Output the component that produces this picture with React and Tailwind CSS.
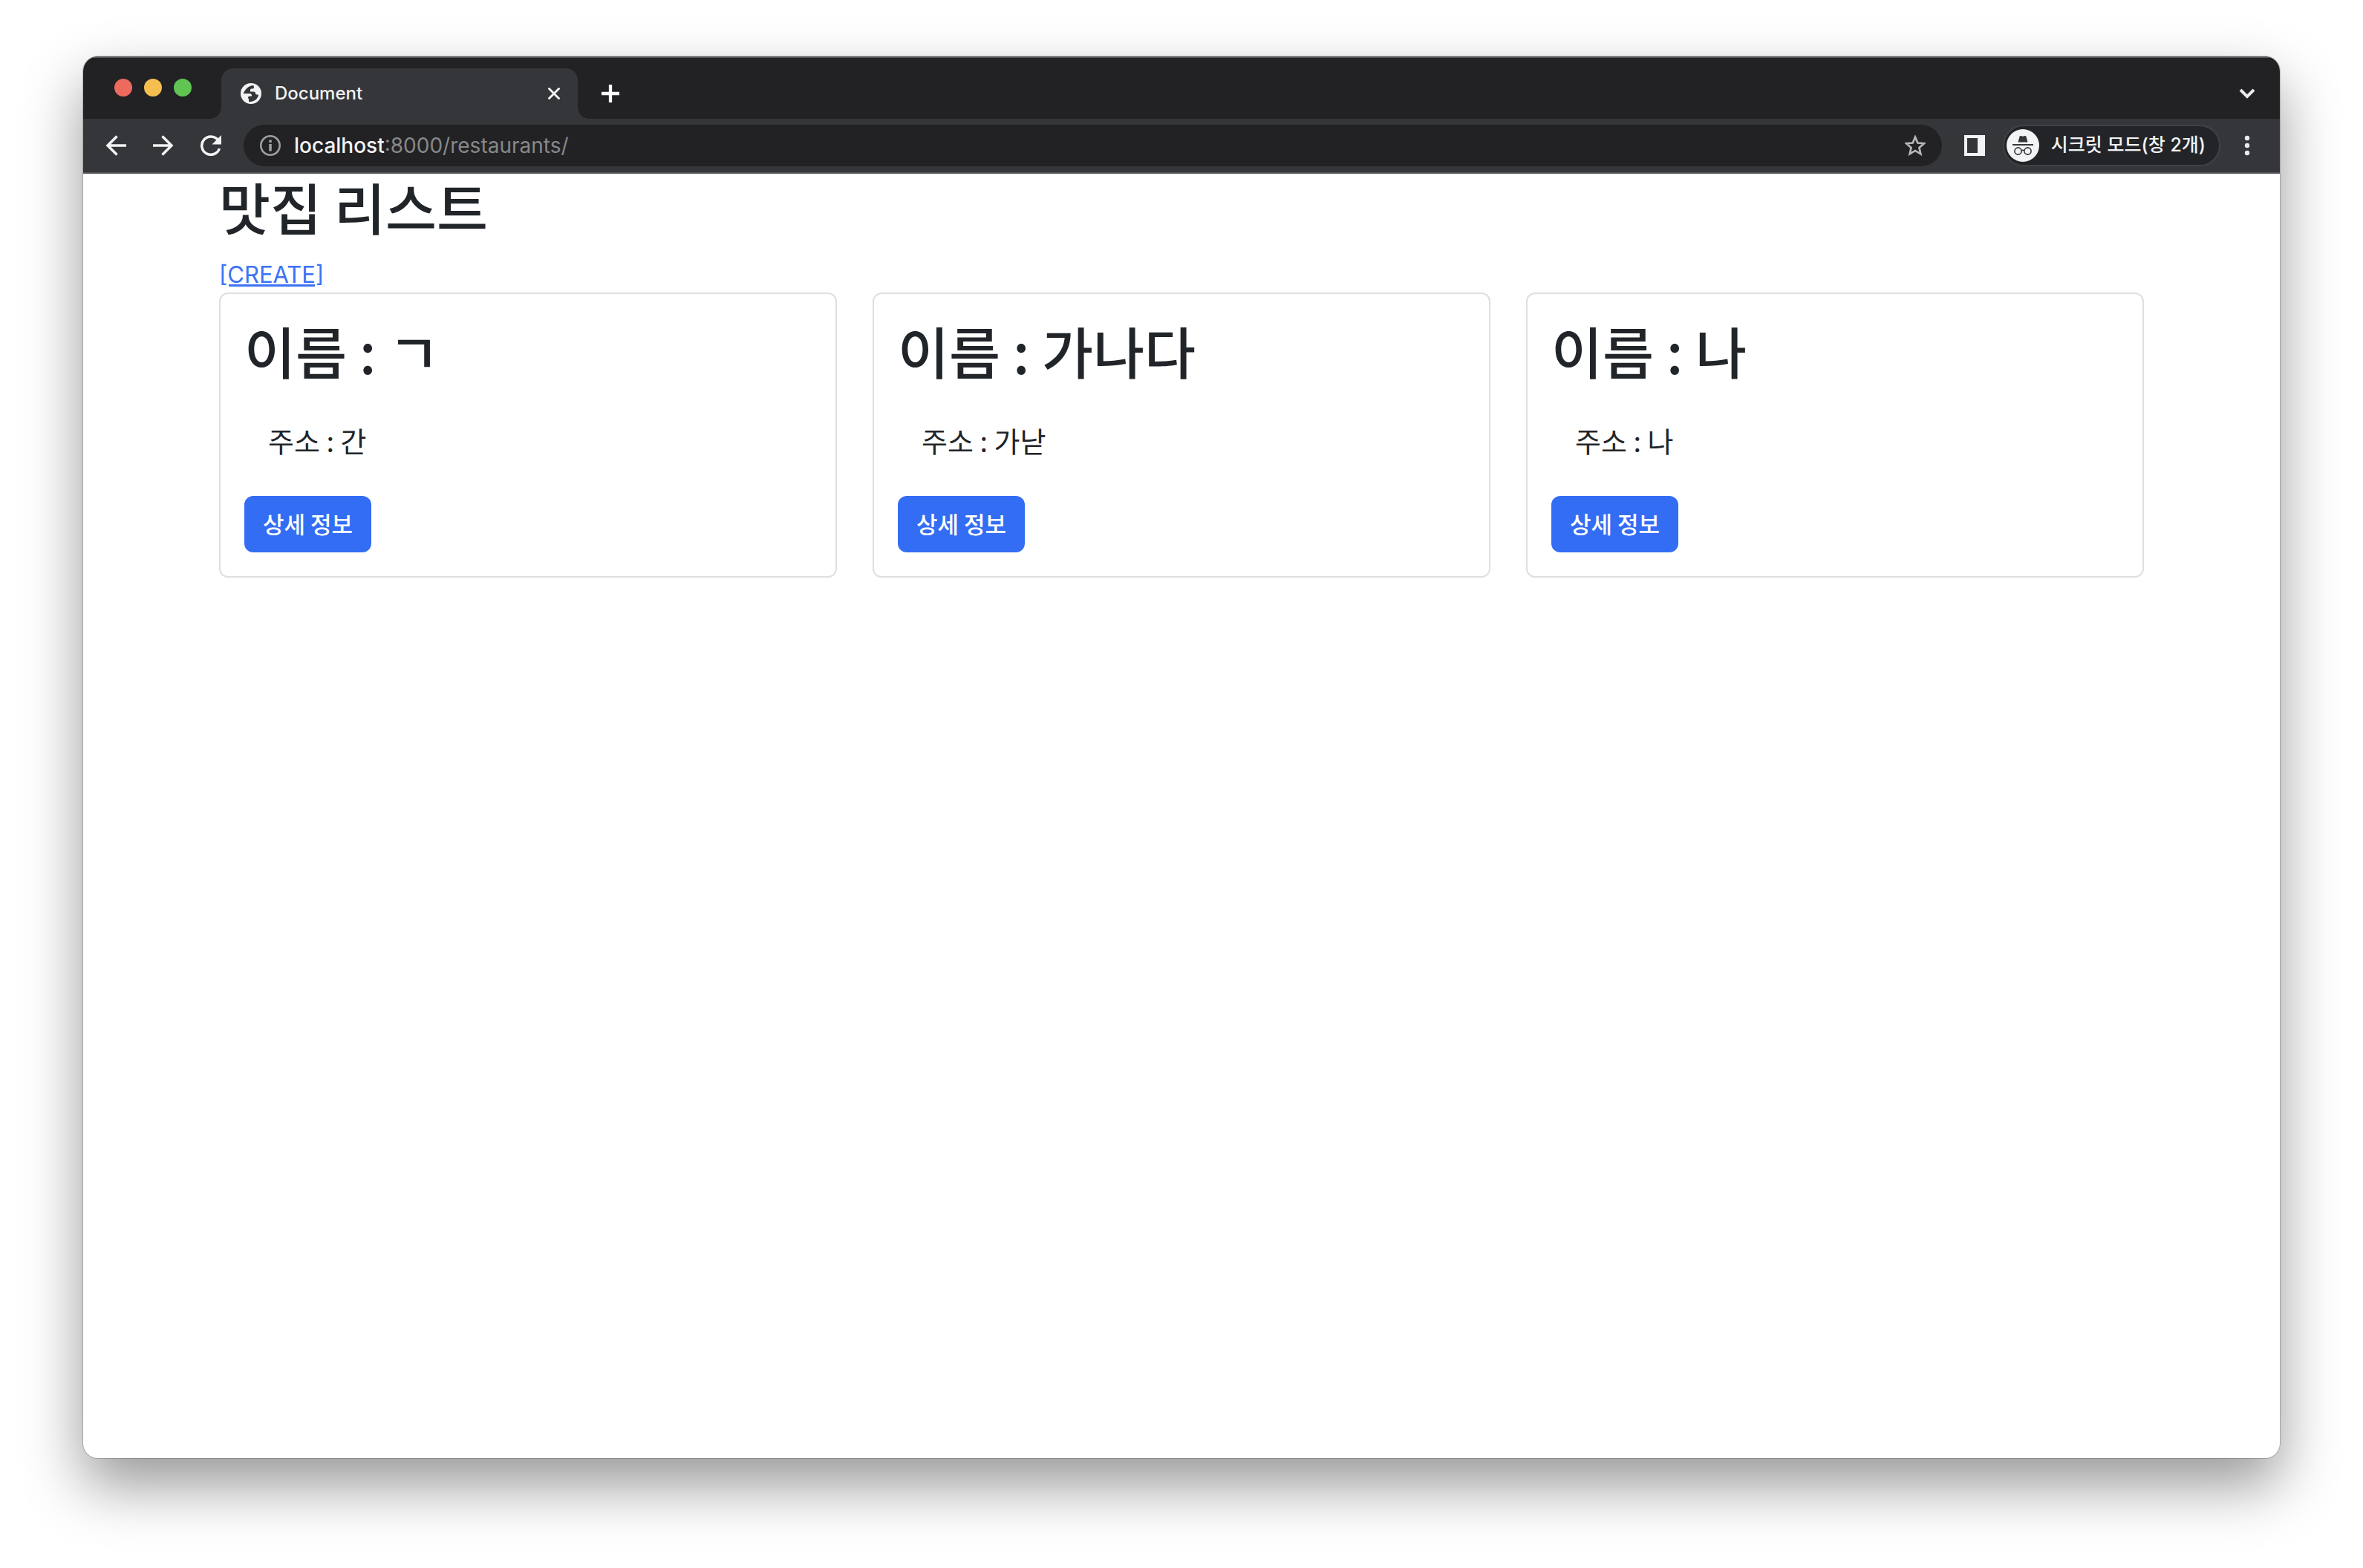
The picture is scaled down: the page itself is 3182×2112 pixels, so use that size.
import React from "react";

const restaurants = [
  { name: "ㄱ", address: "간" },
  { name: "가나다", address: "가낟" },
  { name: "나", address: "나" },
];

function Icon({ children, className = "size-7", ...rest }) {
  return (
    <svg viewBox="0 0 28 28" fill="none" className={className} aria-hidden="true" {...rest}>
      {children}
    </svg>
  );
}

function TabStrip() {
  return (
    <div className="flex h-[84px] items-end border-t-2 border-[#55565a] bg-[#222224] pr-[30px]">
      <div className="flex h-[84px] w-[170px] shrink-0 items-center gap-4 pl-[42px]">
        <button aria-label="Close window" className="size-6 rounded-full bg-[#ed6a5e]" />
        <button aria-label="Minimize window" className="size-6 rounded-full bg-[#f5bf4f]" />
        <button aria-label="Zoom window" className="size-6 rounded-full bg-[#61c554]" />
      </div>
      <svg viewBox="0 0 16 16" className="size-4 shrink-0" aria-hidden="true">
        <path d="M16 0v16H0C9 16 16 9 16 0z" fill="#35363a" />
      </svg>
      <div className="flex h-[68px] w-[480px] shrink-0 items-center rounded-t-2xl bg-[#35363a] pr-6 pl-[26px]">
        <Icon>
          <circle cx="14" cy="14" r="14" fill="#f1f3f4" />
          <path
            d="M17.500 3C13 3 8 6 5.500 10.500L3.500 14h9c1.500 0 2.500 1 2.500 2.500v1h-2.500c-1.500 0-2.500.7-2.500 2s1 1.500 1 2.500V25c5 .5 10.500-2 12.500-7l.5-2.500h-2c-1.500 0-2-1-2-2s-1-2-2.500-2H13V9.500c0-1.500.8-2 2-2h1.500c1 0 1.500-1 1.500-2z"
            fill="#35363a"
          />
        </Icon>
        <span className="ml-[18px] flex-1 text-2xl font-medium text-[#f1f3f4]">Document</span>
        <button aria-label="Close tab" className="flex size-4 items-center justify-center">
          <Icon className="size-4" stroke="#f1f3f4" strokeWidth="5">
            <path d="M1 1l26 26M27 1L1 27" />
          </Icon>
        </button>
      </div>
      <svg viewBox="0 0 16 16" className="size-4 shrink-0" aria-hidden="true">
        <path d="M0 0v16h16C7 16 0 9 0 0z" fill="#35363a" />
      </svg>
      <button aria-label="New tab" className="ml-4 flex h-[68px] w-6 items-center justify-center">
        <Icon className="size-6" stroke="#ffffff" strokeWidth="5">
          <path d="M14 0v28M0 14h28" />
        </Icon>
      </button>
      <button aria-label="Search tabs" className="ml-auto flex h-[68px] w-7 items-center justify-center">
        <Icon stroke="#e8eaed" strokeWidth="4">
          <path d="M5 9l9 9 9-9" />
        </Icon>
      </button>
    </div>
  );
}

function Toolbar() {
  return (
    <div className="flex items-center border-b-2 border-[#55565a] bg-[#35363a] py-2 pr-[30px] pl-[30px]">
      <div className="mr-[30px] flex gap-9">
        <button aria-label="Back">
          <Icon stroke="#f1f3f4" strokeWidth="3.500">
            <path d="M28 14H3M15.500 1.500L3 14l12.500 12.500" />
          </Icon>
        </button>
        <button aria-label="Forward">
          <Icon stroke="#f1f3f4" strokeWidth="3.500">
            <path d="M0 14h25M12.500 1.500L25 14 12.500 26.500" />
          </Icon>
        </button>
        <button aria-label="Reload">
          <Icon>
            <path d="M23.500 6.500A12.200 12.200 0 1 0 25.500 18" stroke="#f1f3f4" strokeWidth="3.500" />
            <path d="M28 0v12.500H15.500z" fill="#f1f3f4" />
          </Icon>
        </button>
      </div>
      <div className="flex h-14 flex-1 items-center rounded-full bg-[#222224] px-[22px]">
        <Icon className="size-7 shrink-0">
          <circle cx="14" cy="14" r="12.700" stroke="#9aa0a6" strokeWidth="2.600" />
          <path d="M14 12v9.500M14 6.500v3.500" stroke="#9aa0a6" strokeWidth="3.600" />
        </Icon>
        <a href="#" className="ml-[18px] flex-1 text-[28px] leading-9 text-[#87888b]">
          <span className="font-medium text-[#f1f3f4]">localhost</span>:8000/restaurants/
        </a>
        <button aria-label="Bookmark this page">
          <Icon stroke="#b5b7ba" strokeWidth="2.600">
            <path d="M14 2.500l3.300 8 8.700.7-6.600 5.700 2 8.500L14 20.900l-7.400 4.500 2-8.500L2 11.200l8.700-.7z" />
          </Icon>
        </button>
      </div>
      <button aria-label="Side panel" className="ml-[30px]">
        <Icon>
          <path fillRule="evenodd" d="M0 0h28v28H0zM4 4v20h14V4z" fill="#f1f3f4" />
        </Icon>
      </button>
      <button className="ml-6 flex h-14 items-center gap-4 rounded-full border-2 border-[#414145] bg-[#232428] pr-[18px] pl-[3px] text-[25px] font-medium text-[#f1f3f4]">
        <svg viewBox="0 0 44 44" className="size-11" aria-hidden="true">
          <circle cx="22" cy="22" r="22" fill="#f1f3f4" />
          <path d="M15.500 17.500L17.500 10q.5-1.500 2-1l2.500.8 2.500-.8q1.500-.5 2 1l2 7.500z" fill="#35363a" />
          <path d="M8 21h28" stroke="#35363a" strokeWidth="2" />
          <g fill="none" stroke="#35363a" strokeWidth="1.600">
            <circle cx="15.500" cy="29.500" r="4.600" />
            <circle cx="28.500" cy="29.500" r="4.600" />
            <path d="M20 29q2-1.400 4 0" />
          </g>
        </svg>
        시크릿 모드(창 2개)
      </button>
      <button aria-label="Browser menu" className="ml-[22px]">
        <Icon fill="#e8eaed">
          <circle cx="14" cy="4" r="3.200" />
          <circle cx="14" cy="14" r="3.200" />
          <circle cx="14" cy="24" r="3.200" />
        </Icon>
      </button>
    </div>
  );
}

function RestaurantCard({ name, address }) {
  return (
    <article className="rounded-xl border-2 border-[#dfdfdf] p-8">
      <h2 className="mb-6 text-[75px] leading-[88px] font-medium">이름 : {name}</h2>
      <p className="mb-4 px-8 pt-8 pb-[38px] text-[38px] leading-[42px]">주소 : {address}</p>
      <button className="flex h-[76px] items-center rounded-xl bg-[#336df4] px-[25px] pb-[2px] text-[31px] font-medium text-white">
        상세 정보
      </button>
    </article>
  );
}

export default function App() {
  return (
    <div className="flex min-h-screen flex-col bg-white px-28 pt-[76px] pb-[148px] font-[Inter,'Noto_Sans_CJK_KR',sans-serif]">
      <div className="flex flex-1 flex-col overflow-hidden rounded-[20px] bg-white shadow-[0_0_0_1px_rgba(0,0,0,0.2),0_36px_80px_rgba(0,0,0,0.41)]">
        <TabStrip />
        <Toolbar />
        <main className="mx-auto w-full max-w-[2640px] px-6 font-['Noto_Sans_CJK_KR',sans-serif] text-[#212529]">
          <h1 className="mb-6 text-[75px] leading-[88px] font-medium">맛집 리스트</h1>
          <a
            href="#"
            className="block w-fit font-[Inter,sans-serif] text-[31px] leading-12 text-[#3d72f5] underline"
          >
            [CREATE]
          </a>
          <div className="grid grid-cols-3 gap-12">
            {restaurants.map((r) => (
              <RestaurantCard key={r.name} {...r} />
            ))}
          </div>
        </main>
      </div>
    </div>
  );
}
